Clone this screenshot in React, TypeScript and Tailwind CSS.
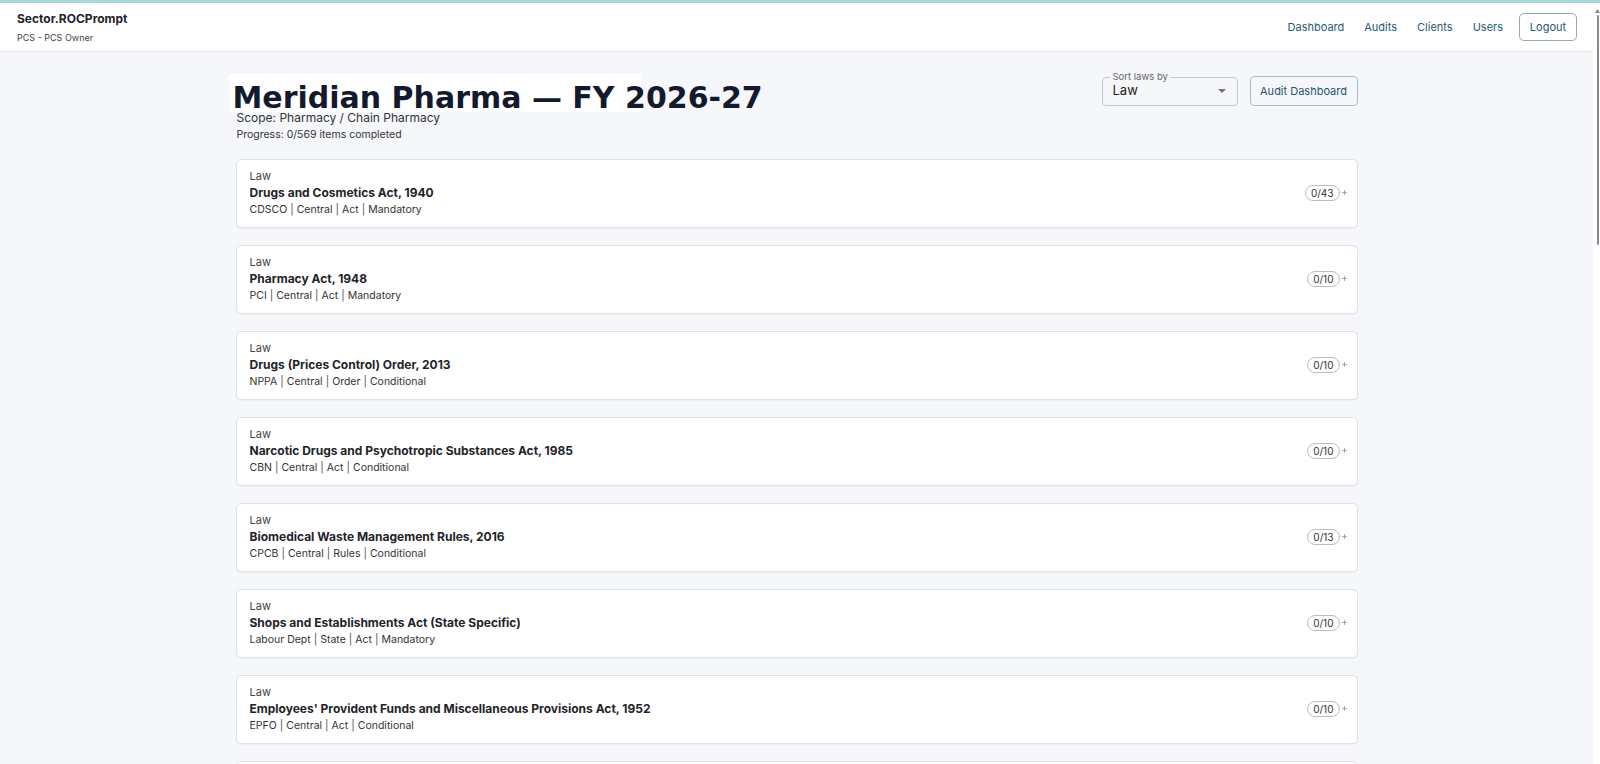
import { Fragment } from "react";
import { Plus } from "lucide-react";

type LawRow = {
  name: string;
  regulator: string;
  scope: string;
  kind: string;
  applicability: string;
  done: number;
  total: number;
};

const LAWS: LawRow[] = [
  { name: "Drugs and Cosmetics Act, 1940", regulator: "CDSCO", scope: "Central", kind: "Act", applicability: "Mandatory", done: 0, total: 43 },
  { name: "Pharmacy Act, 1948", regulator: "PCI", scope: "Central", kind: "Act", applicability: "Mandatory", done: 0, total: 10 },
  { name: "Drugs (Prices Control) Order, 2013", regulator: "NPPA", scope: "Central", kind: "Order", applicability: "Conditional", done: 0, total: 10 },
  { name: "Narcotic Drugs and Psychotropic Substances Act, 1985", regulator: "CBN", scope: "Central", kind: "Act", applicability: "Conditional", done: 0, total: 10 },
  { name: "Biomedical Waste Management Rules, 2016", regulator: "CPCB", scope: "Central", kind: "Rules", applicability: "Conditional", done: 0, total: 13 },
  { name: "Shops and Establishments Act (State Specific)", regulator: "Labour Dept", scope: "State", kind: "Act", applicability: "Mandatory", done: 0, total: 10 },
  { name: "Employees' Provident Funds and Miscellaneous Provisions Act, 1952", regulator: "EPFO", scope: "Central", kind: "Act", applicability: "Conditional", done: 0, total: 10 },
  { name: "Employees' State Insurance Act, 1948", regulator: "ESIC", scope: "Central", kind: "Act", applicability: "Conditional", done: 0, total: 10 },
];

const NAV = ["Dashboard", "Audits", "Clients", "Users"];

function Header() {
  return (
    <header className="flex h-[49px] items-center justify-between border-b border-[#e3e7eb] bg-white pl-[17px] pr-4">
      <div className="flex flex-col">
        <span className="text-xs font-bold leading-[18px] text-[#1f2328]">Sector.ROCPrompt</span>
        <span className="mt-[3px] text-[9px] leading-[13px] text-[#444]">PCS - PCS Owner</span>
      </div>
      <nav className="flex items-center">
        {NAV.map((item) => (
          <a key={item} className="px-[10px] text-[11px] leading-4 text-[#245a78]">
            {item}
          </a>
        ))}
        <button
          type="button"
          className="ml-[6px] h-[28px] w-[58px] rounded-[5px] border border-[#94aab6] text-[11px] text-[#245a78]"
        >
          Logout
        </button>
      </nav>
    </header>
  );
}

function SortSelect() {
  return (
    <div className="relative flex h-[29px] w-[136px] items-center justify-between rounded-[4px] border border-[#c4c8cc] pl-[10px] pr-[11px]">
      <span className="absolute left-[7px] top-[-7px] bg-[#f5f7fa] px-[3px] text-[9.5px] leading-[12px] text-[#666]">
        Sort laws by
      </span>
      <span className="text-[13px] text-[#222]">Law</span>
      <svg width="8" height="4" viewBox="0 0 8 4" className="fill-[#777]">
        <path d="M0 0h8L4 4z" />
      </svg>
    </div>
  );
}

function LawCard({ law }: { law: LawRow }) {
  const meta = [law.regulator, law.scope, law.kind, law.applicability];
  return (
    <div className="flex items-center justify-between rounded-[5px] border border-[#dde2e7] bg-white pb-[9px] pl-[13px] pr-[9px] pt-[8px] shadow-[0_1px_1px_rgba(0,0,0,0.04)]">
      <div>
        <div className="text-[11px] leading-4 text-[#444]">Law</div>
        <div className="text-xs font-bold leading-[18px] text-[#1f2328]">{law.name}</div>
        <div className="text-[10.5px] leading-4 text-[#333]">
          {meta.map((m, i) => (
            <Fragment key={i}>
              {i > 0 && <span className="px-[3px] text-[#555]">|</span>}
              <span>{m}</span>
            </Fragment>
          ))}
        </div>
      </div>
      <div className="-mt-[1px] flex items-center">
        <span className="rounded-full border border-[#b9bec4] px-[5px] text-[10px] leading-[14px] text-[#333]">
          {law.done}/{law.total}
        </span>
        <Plus className="ml-[1px] h-[7px] w-[7px] text-[#999]" strokeWidth={3} />
      </div>
    </div>
  );
}

export default function App() {
  const completed = LAWS.reduce((n, l) => n + l.done, 0);
  return (
    <div className="flex h-[764px] flex-col overflow-hidden bg-[#f5f7fa] font-['Inter',sans-serif]">
      <div className="h-[3px] shrink-0 bg-[#a9d8db]" />
      <div className="flex min-h-0 flex-1">
        <div className="min-w-0 flex-1">
          <Header />
          <main className="mx-auto max-w-[1154px] px-4 pt-[22px]">
            <div className="flex items-start justify-between">
              <div>
                <div className="-ml-[7px] h-[38px] w-[412px] whitespace-nowrap bg-white pl-[4px]">
                  <h1 className="font-['DejaVu_Sans',sans-serif] text-[30px] font-bold leading-[48px] text-[#141a2e]">
                    Meridian Pharma — FY 2026-27
                  </h1>
                </div>
                <p className="-mt-[3px] ml-px text-xs leading-[17px] text-[#333]">Scope: Pharmacy / Chain Pharmacy</p>
                <p className="ml-px text-[10.5px] leading-[17px] text-[#333]">
                  Progress: {completed}/569 items completed
                </p>
              </div>
              <div className="flex items-center gap-3 pt-[2px]">
                <SortSelect />
                <button
                  type="button"
                  className="h-[30px] w-[108px] rounded-[4px] border border-[#a9bcc7] text-[11px] text-[#1f5470]"
                >
                  Audit Dashboard
                </button>
              </div>
            </div>
            <div className="mt-[16px] flex flex-col gap-[17px]">
              {LAWS.map((law) => (
                <LawCard key={law.name} law={law} />
              ))}
            </div>
          </main>
        </div>
        {/* thin overlay-style scrollbar */}
        <div className="relative w-[7px] shrink-0 bg-white">
          <svg width="5" height="4" viewBox="0 0 5 4" className="absolute right-0 top-[6px] fill-[#8a8a8a]">
            <path d="M2.5 0L5 4H0z" />
          </svg>
          <div className="absolute right-[1px] top-[12px] h-[230px] w-[2px] rounded-full bg-[#8a8a8a]" />
        </div>
      </div>
    </div>
  );
}
